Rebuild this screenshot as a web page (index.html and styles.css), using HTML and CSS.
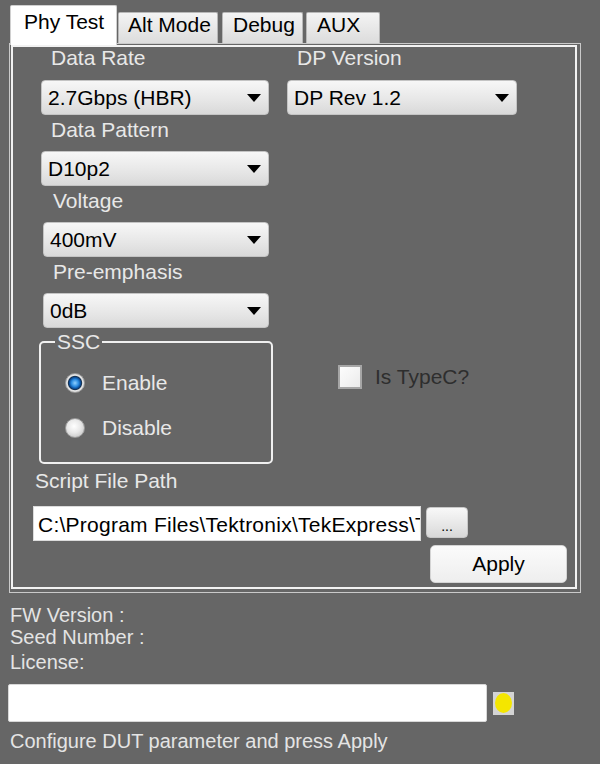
FILE: index.html
```html
<!DOCTYPE html>
<html>
<head>
<meta charset="utf-8">
<title>Phy Test</title>
<link rel="stylesheet" href="styles.css">
</head>
<body>
<div class="window">
  <div class="tabs">
    <div class="tab active">Phy Test</div>
    <div class="tab t-alt">Alt Mode</div>
    <div class="tab t-debug">Debug</div>
    <div class="tab t-aux">AUX</div>
  </div>
  <div class="panel">
    <div class="panel-inner">
      <div class="top-grid">
        <div class="col-left">
          <div class="lbl first">Data Rate</div>
          <div class="combo"><span>2.7Gbps (HBR)</span><svg class="arrow" width="14" height="8" viewBox="0 0 14 8"><path d="M0 0H14L7 8Z"/></svg></div>
          <div class="lbl">Data Pattern</div>
          <div class="combo"><span>D10p2</span><svg class="arrow" width="14" height="8" viewBox="0 0 14 8"><path d="M0 0H14L7 8Z"/></svg></div>
          <div class="shift">
            <div class="lbl">Voltage</div>
            <div class="combo"><span>400mV</span><svg class="arrow" width="14" height="8" viewBox="0 0 14 8"><path d="M0 0H14L7 8Z"/></svg></div>
            <div class="lbl">Pre-emphasis</div>
            <div class="combo"><span>0dB</span><svg class="arrow" width="14" height="8" viewBox="0 0 14 8"><path d="M0 0H14L7 8Z"/></svg></div>
          </div>
        </div>
        <div class="col-right">
          <div class="lbl first">DP Version</div>
          <div class="combo"><span>DP Rev 1.2</span><svg class="arrow" width="14" height="8" viewBox="0 0 14 8"><path d="M0 0H14L7 8Z"/></svg></div>
        </div>
      </div>
      <div class="mid">
        <fieldset class="ssc">
          <legend>SSC</legend>
          <div class="radio-row"><span class="radio on"></span><span>Enable</span></div>
          <div class="radio-row"><span class="radio"></span><span>Disable</span></div>
        </fieldset>
        <div class="typec"><span class="check"></span><span>Is TypeC?</span></div>
      </div>
      <div class="lbl path-lbl">Script File Path</div>
      <div class="path-row">
        <div class="textbox"><span class="path-text">C:\Program Files\Tektronix\TekExpress\T</span></div>
        <div class="btn browse">...</div>
      </div>
      <div class="apply-row"><div class="btn apply">Apply</div></div>
    </div>
  </div>
  <div class="info">
    <div class="info-line">FW Version :</div>
    <div class="info-line">Seed Number :</div>
    <div class="info-line license">License:</div>
    <div class="license-row">
      <div class="license-box"></div>
      <div class="indicator"><span class="dot"></span></div>
    </div>
    <div class="info-line status">Configure DUT parameter and press Apply</div>
  </div>
</div>
</body>
</html>
```
FILE: styles.css
```css
html, body {
  margin: 0;
  padding: 0;
  background: #666666;
}
body {
  font-family: "Liberation Sans", Arial, sans-serif;
  font-size: 21px;
  color: #e6e6e6;
  width: 600px;
  height: 764px;
  overflow: hidden;
}

/* Tabs */
.tabs {
  display: flex;
  align-items: flex-end;
  height: 38px;
  padding: 5px 0 0 10px;
}
.tab {
  box-sizing: border-box;
  height: 31px;
  padding: 1px 0 0 10px;
  line-height: 22px;
  color: #000;
  background: linear-gradient(#f4f4f4, #dcdcdc);
  border: 1px solid #b8b8b8;
  border-bottom: none;
  border-radius: 2px 2px 0 0;
}
.tab.active {
  position: relative;
  z-index: 2;
  width: 107px;
  height: 40px;
  margin-bottom: -2px;
  padding: 5px 0 0 13px;
  background: #ffffff;
  border-color: #d0d0d0;
}
.t-alt { width: 100px; margin-left: 1px; padding-left: 9px; }
.t-debug { width: 81px; margin-left: 4px; }
.t-aux { width: 74px; margin-left: 3px; }

/* Panel */
.panel {
  box-sizing: border-box;
  width: 572px;
  height: 550px;
  margin-left: 9px;
  border: 1px solid #cacaca;
  padding: 1px 3px 3px 1px;
}
.panel-inner {
  box-sizing: border-box;
  height: 100%;
  border: 2px solid #f2f2f2;
}

.top-grid {
  display: flex;
  gap: 18px;
  padding-left: 28px;
}
.col-left { width: 228px; }
.col-right { width: 230px; }
.shift { margin-left: 2px; }

.lbl {
  box-sizing: border-box;
  height: 36px;
  padding: 4px 0 0 10px;
  line-height: 22px;
  color: #e8e8e8;
}
.lbl.first {
  height: 33px;
  padding-top: 0;
}

.combo {
  box-sizing: border-box;
  height: 35px;
  display: flex;
  align-items: center;
  justify-content: space-between;
  padding: 0 7px 0 6px;
  color: #000;
  background: linear-gradient(#f7f7f7, #e6e6e6 60%, #d9d9d9);
  border: 1px solid #c4c4c4;
  border-radius: 4px;
  line-height: 22px;
}
.arrow { display: block; fill: #000; }

/* Middle */
.mid {
  display: flex;
  align-items: flex-start;
  height: 136px;
}
.ssc {
  box-sizing: border-box;
  width: 234px;
  height: 132px;
  margin: 4px 0 0 26px;
  padding: 0 0 0 24px;
  border: 2px solid #f0f0f0;
  border-radius: 5px;
  min-width: 0;
}
.ssc legend {
  margin-left: -10px;
  padding: 0 2px;
  line-height: 20px;
  color: #e8e8e8;
}
.radio-row {
  display: flex;
  align-items: center;
  height: 45px;
  gap: 17px;
  color: #e8e8e8;
  line-height: 22px;
}
.radio-row:first-of-type { margin-top: 8px; }
.radio {
  box-sizing: border-box;
  width: 20px;
  height: 20px;
  border-radius: 50%;
  background: radial-gradient(circle at 45% 40%, #ffffff 0%, #e8e8e8 45%, #b8b8b8 100%);
  border: 1px solid #9c9c9c;
}
.radio.on {
  background: radial-gradient(circle at 50% 50%, #8fd0ff 0%, #2a8be0 28%, #0a4a94 45%, #17324f 52%, #e4e4e4 60%, #cfcfcf 100%);
}
.typec {
  display: flex;
  align-items: center;
  gap: 13px;
  margin: 37px 0 0 65px;
  color: #2e2e2e;
  line-height: 24px;
}
.check {
  box-sizing: border-box;
  width: 24px;
  height: 24px;
  border: 2px solid #a6a6a6;
  background: linear-gradient(135deg, #fdfdfd, #ebebeb);
}

/* Script path */
.lbl.path-lbl {
  height: 42px;
  padding: 6px 0 0 22px;
}
.path-row {
  display: flex;
  align-items: flex-start;
  gap: 5px;
  padding-left: 20px;
}
.textbox {
  box-sizing: border-box;
  width: 388px;
  height: 35px;
  padding: 0 0 0 4px;
  background: #ffffff;
  color: #000;
  line-height: 35px;
  white-space: nowrap;
  overflow: hidden;
  border: 1px solid #dcdcdc;
}
.path-text { letter-spacing: 0.25px; }
.btn {
  box-sizing: border-box;
  color: #000;
  background: linear-gradient(#f8f8f8, #e6e6e6 60%, #d8d8d8);
  border: 1px solid #c8c8c8;
  border-radius: 4px;
  text-align: center;
}
.browse {
  width: 42px;
  height: 31px;
  margin-top: 1px;
  font-size: 14px;
  line-height: 36px;
}
.apply-row {
  padding: 4px 0 0 417px;
}
.apply {
  width: 137px;
  height: 38px;
  line-height: 36px;
  background: linear-gradient(#fbfbfb, #eeeeee);
  border-color: #d4d4d4;
  border-radius: 5px;
}

/* Info */
.info {
  padding: 11px 0 0 8px;
  font-size: 20px;
  color: #e4e4e4;
}
.info-line {
  padding-left: 2px;
  line-height: 22px;
}
.info-line.license { margin-top: 3px; }
.license-row {
  display: flex;
  align-items: center;
  gap: 6px;
  margin-top: 11px;
}
.license-box {
  box-sizing: border-box;
  width: 479px;
  height: 38px;
  background: #ffffff;
  border: 1px solid #d8d8d8;
  border-radius: 2px;
}
.indicator {
  box-sizing: border-box;
  width: 21px;
  height: 23px;
  background: #d4d4d4;
  display: flex;
  align-items: center;
  justify-content: center;
}
.dot {
  width: 17px;
  height: 20px;
  border-radius: 50%;
  background: #f4e600;
}
.info-line.status { margin-top: 8px; }
```
